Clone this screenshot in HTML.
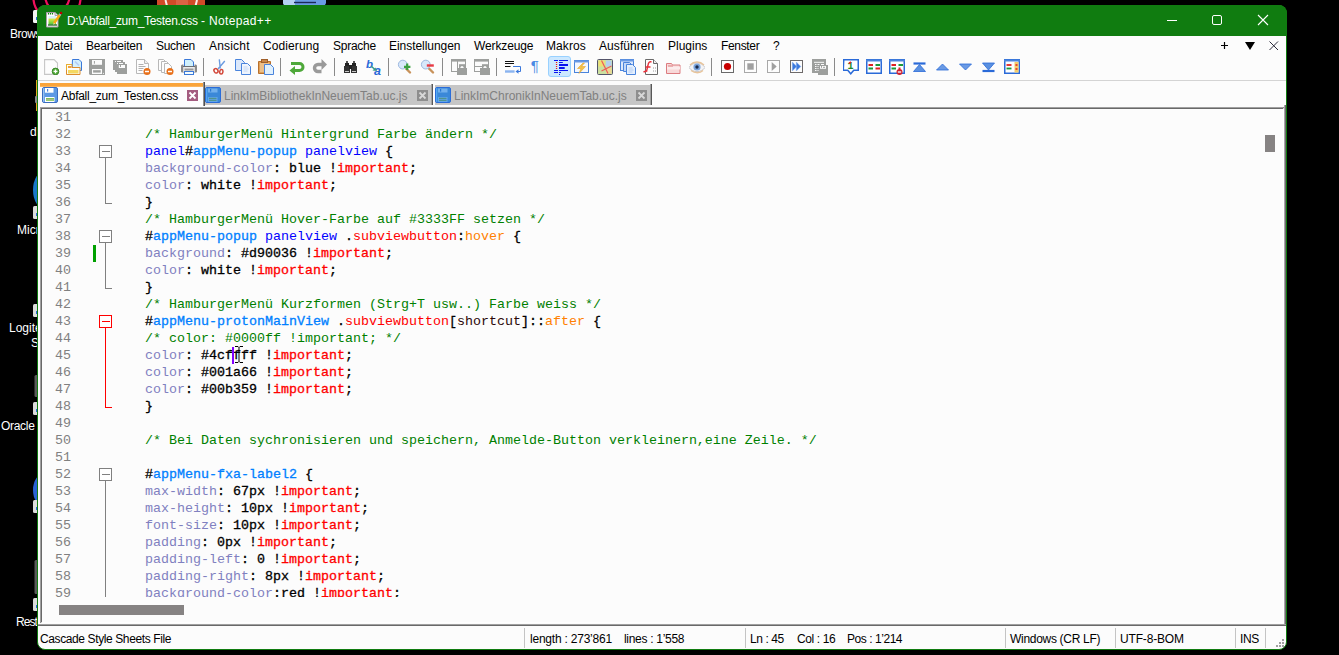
<!DOCTYPE html>
<html lang="de"><head><meta charset="utf-8"><title>Notepad++</title>
<style>
*{box-sizing:border-box;margin:0;padding:0}
html,body{width:1339px;height:655px;overflow:hidden;background:#000}
body{position:relative;font-family:"Liberation Sans",sans-serif;font-size:12px;color:#000}
.abs{position:absolute}
.dl{position:absolute;color:#fff;font-size:12px;white-space:nowrap}
#win{position:absolute;left:37px;top:5px;width:1250px;height:645px;background:#fcfcfc;border:1px solid #107c10;border-radius:8px;overflow:hidden}
#title{position:absolute;left:37px;top:5px;width:1250px;height:31px;background:#107c10;border-radius:8px 8px 0 0}
#ttext{position:absolute;left:67px;top:14px;font-size:12px;color:#fff;white-space:nowrap;line-height:15px}
.mi{position:absolute;top:39px;font-size:12px;white-space:nowrap;line-height:14px}
.tabt{position:absolute;top:89px;font-size:12px;white-space:nowrap;line-height:15px}
.sep{position:absolute;top:58px;width:1px;height:18px;background:#8a8a8a}
#editor{position:absolute;left:40px;top:107px;width:1244px;height:516px;border-top:2px solid #696969;border-left:2px solid #696969;border-right:1px solid #fff;border-bottom:1px solid #fff;background:#fcfcfc;overflow:hidden}
#code{position:absolute;left:0;top:0;width:1242px;height:488px;overflow:hidden}
.ln{position:absolute;left:0;width:29px;text-align:right;font-family:"Liberation Mono",monospace;font-size:13.330px;line-height:17px;height:17px;color:#808080;white-space:pre}
.cl{position:absolute;left:103px;font-family:"Liberation Mono",monospace;font-size:13.330px;line-height:17px;height:17px;white-space:pre;color:#000}
.c{color:#008000}.t{color:#0000ff}.o,.v,.i,.m{-webkit-text-stroke:.3px currentColor}.o{color:#000}.i{color:#0080ff}
.p{color:#8080c0}.v{color:#000}.m{color:#ff0000}.k{color:#ff0000}.h{color:#ff8000}
.st{position:absolute;top:632px;font-size:12px;white-space:nowrap;line-height:14px}
.sv{position:absolute;top:628px;width:1px;height:20px;background:#c4c4c4}
</style></head><body>

<div class="dl" style="left:10px;top:27px;letter-spacing:-0.5px">Brows</div>
<div class="dl" style="left:30px;top:125px;letter-spacing:0px">d</div>
<div class="dl" style="left:17px;top:223px;letter-spacing:0px">Micr</div>
<div class="dl" style="left:9px;top:321px;letter-spacing:0px">Logite</div>
<div class="dl" style="left:31px;top:336px;letter-spacing:0px">S</div>
<div class="dl" style="left:1px;top:419px;letter-spacing:-0.3px">Oracle</div>
<div class="dl" style="left:16px;top:615px;letter-spacing:-0.95px">Rest</div>
<svg class="abs" style="left:0;top:0" width="1339" height="655"><circle cx="57" cy="-2.600" r="23.600" fill="none" stroke="#f0105c" stroke-width="2.200"/><ellipse cx="57.400" cy="-6" rx="12.500" ry="17" fill="none" stroke="#f0105c" stroke-width="2.200"/><rect x="157" y="0" width="48" height="6" fill="#d24a28"/><path d="M165.500 0l1.500 6M197 0l-1.500 6" stroke="#fbeee8" stroke-width="2"/><rect x="176" y="0" width="12" height="6" fill="#dc6244"/><path d="M283 0h43v3a4 4 0 0 1-4 3h-35a4 4 0 0 1-4-3z" fill="#6a9ae4"/><path d="M283 0h12v6h-8a4 4 0 0 1-4-3z" fill="#b4d0f4"/><path d="M294 2.500h22" stroke="#1a2a5a" stroke-width="1.400"/><rect x="33" y="10" width="6" height="13" rx="1.500" fill="#f4f4f4"/><rect x="36" y="17" width="2" height="3" fill="#2a6ad8"/><path d="M36.500 80v31" stroke="#e8a820" stroke-width="1"/><rect x="35" y="96" width="3" height="7" rx="1" fill="#8a8a8a"/><ellipse cx="45" cy="190" rx="12" ry="19" fill="#1a78c8"/><rect x="33" y="206" width="6" height="13" rx="1.500" fill="#dcdcdc"/><rect x="36" y="213" width="2" height="3" fill="#2a6ad8"/><rect x="33" y="304" width="6" height="13" rx="1.500" fill="#dcdcdc"/><rect x="36" y="311" width="2" height="3" fill="#2a6ad8"/><rect x="34.500" y="375" width="4" height="22" rx="1.500" fill="#5a5a5a"/><rect x="33" y="402" width="6" height="13" rx="1.500" fill="#dcdcdc"/><rect x="36" y="409" width="2" height="3" fill="#2a6ad8"/><ellipse cx="45" cy="490" rx="12" ry="17" fill="#2a62d4"/><rect x="33" y="500" width="6" height="13" rx="1.500" fill="#dcdcdc"/><rect x="36" y="507" width="2" height="3" fill="#2a6ad8"/><rect x="34.500" y="560" width="4" height="34" rx="1.500" fill="#5a5a5a"/><rect x="33" y="598" width="6" height="13" rx="1.500" fill="#dcdcdc"/><rect x="36" y="605" width="2" height="3" fill="#2a6ad8"/></svg>
<!--DESKICONS-->
<div id="win"></div>
<div id="title"></div>
<svg class="abs" style="left:45px;top:11px" width="18" height="18" viewBox="0 0 18 18"><defs><linearGradient id="ng" x1="0" y1="0" x2="0" y2="1"><stop offset="0" stop-color="#d8f0fb"/><stop offset=".25" stop-color="#d8f0fb"/><stop offset=".35" stop-color="#d8e84a"/><stop offset="1" stop-color="#4ec83a"/></linearGradient></defs><path d="M1.500 1.500h8.500l3 3v11.500h-11.500z" fill="#fff" stroke="#a89aa8" stroke-width="1"/><path d="M10 1.500v3h3" fill="#e8e8e8" stroke="#a89aa8"/><rect x="3.500" y="5" width="7.500" height="8.500" fill="url(#ng)"/><path d="M3 14h9" stroke="#0a5a0a" stroke-width="1.200"/><path d="M3.500 2v1.500M5.500 2v1.500M7.500 2v1.500" stroke="#107c10" stroke-width="1.200"/><path d="M9 12.500l6-9" stroke="#f8a810" stroke-width="2.400"/><path d="M8.200 13.800l.6-2 1.400 1z" fill="#f4e0b0"/><path d="M14.600 4l.8-1.200" stroke="#8ab4d8" stroke-width="2.400"/><circle cx="16" cy="2" r="1.300" fill="#c00000"/></svg>
<div id="ttext"><span style="letter-spacing:-.31px">D:\Abfall_zum_Testen.css</span><span style="position:absolute;left:134px">-</span><span style="position:absolute;left:142px;letter-spacing:.35px">Notepad++</span></div>
<svg class="abs" style="left:1160px;top:10px" width="120" height="22"><path d="M7 10.500h10" stroke="#fff" stroke-width="1"/><rect x="52.500" y="5.500" width="9" height="9" rx="1.500" fill="none" stroke="#fff" stroke-width="1"/><path d="M98 5l10 10M108 5l-10 10" stroke="#fff" stroke-width="1.100"/></svg>
<div class="mi" style="left:45px;letter-spacing:-0.14px">Datei</div>
<div class="mi" style="left:86px;letter-spacing:-0.17px">Bearbeiten</div>
<div class="mi" style="left:156px;letter-spacing:-0.3px">Suchen</div>
<div class="mi" style="left:209px;letter-spacing:0.19px">Ansicht</div>
<div class="mi" style="left:263px;letter-spacing:0.1px">Codierung</div>
<div class="mi" style="left:333px;letter-spacing:-0.26px">Sprache</div>
<div class="mi" style="left:389px;letter-spacing:-0.05px">Einstellungen</div>
<div class="mi" style="left:474px;letter-spacing:-0.13px">Werkzeuge</div>
<div class="mi" style="left:546px;letter-spacing:0.08px">Makros</div>
<div class="mi" style="left:599px;letter-spacing:0.07px">Ausführen</div>
<div class="mi" style="left:668px;letter-spacing:0px">Plugins</div>
<div class="mi" style="left:721px;letter-spacing:-0.33px">Fenster</div>
<div class="mi" style="left:773px;letter-spacing:0px">?</div>
<svg class="abs" style="left:1215px;top:38px" width="70" height="16"><path d="M6 7.500h7M9.500 4v7" stroke="#000" stroke-width="1.200"/><path d="M30 4h10l-5 8z" fill="#000"/><path d="M54.500 3.500l8.500 8.500M63 3.500l-8.500 8.500" stroke="#2a2a3a" stroke-width="1"/></svg>
<div class="abs" style="left:548px;top:56px;width:23px;height:21px;background:#cce8ff;border:1px solid #99d1ff;border-radius:3px"></div>
<svg class="abs" style="left:44px;top:59px" width="16" height="16" viewBox="0 0 16 16"><path d="M.6 .6h9.500l3.400 3.400v11.400h-12.900z" fill="#fdfdfd" stroke="#c6c6c6" stroke-width="1.100"/><circle cx="11.500" cy="12.400" r="3.300" fill="#5ab040" stroke="#2e7e1e" stroke-width=".9"/><path d="M9.600 12.400h3.800M11.500 10.500v3.800" stroke="#fff" stroke-width="1.300"/></svg>
<svg class="abs" style="left:66px;top:59px" width="16" height="16" viewBox="0 0 16 16"><path d="M6.500 .5h6.500l2.500 2.500v8.500h-9.500z" fill="#d4f0fc" stroke="#3a78d8"/><path d="M9 2.500l4 4" stroke="#b4ccf4" stroke-width="1.600"/><path d="M.5 5.500h5.500v3h8v7h-13.500z" fill="#fdfdf6" stroke="#dc8c2c"/><path d="M.5 11v-5.500h5.500" fill="none" stroke="#e8b030"/><rect x="2" y="7" width="3.500" height="2" fill="#f4a03a"/><rect x="2" y="11" width="10.500" height="3.500" fill="#f4d860"/><path d="M6 8.500h8" stroke="#dc8c2c"/></svg>
<svg class="abs" style="left:89px;top:59px" width="16" height="16" viewBox="0 0 16 16"><path d="M0 0h16v16h-15l-1-1z" fill="#9d9f9d"/><rect x="3" y="1" width="10" height="4.800" fill="#fbfbfb"/><rect x="4.900" y="2" width="1" height="2.700" fill="#9d9f9d"/><rect x="3" y="10" width="10" height="5" fill="#fbfbfb"/><rect x="4.100" y="11.200" width="7.600" height="2.400" fill="#9d9f9d"/><rect x="13.900" y="13.900" width="1" height="1" fill="#fbfbfb"/></svg>
<svg class="abs" style="left:112px;top:59px" width="16" height="16" viewBox="0 0 16 16"><path d="M1 1h10v2h2v2h2v10h-10v-2h-2v-2h-2z" fill="#9d9f9d"/><rect x="6.800" y="6" width="6.200" height="3" fill="#fbfbfb"/><rect x="8" y="6" width="1" height="2" fill="#9d9f9d"/><path d="M5 2.500h4M7 4.500h4" stroke="#fbfbfb" stroke-width="1"/><rect x="3" y="2" width="1" height="1" fill="#fbfbfb"/><rect x="5" y="4" width="1" height="1" fill="#fbfbfb"/></svg>
<svg class="abs" style="left:135px;top:59px" width="16" height="16" viewBox="0 0 16 16"><path d="M1.500 .5h8l4 4v10h-12z" fill="#fdfdfd" stroke="#b8b8b8"/><path d="M9.500 .5v4h4" fill="#eee" stroke="#b8b8b8"/><path d="M3.500 5.500h5M3.500 7.500h7M3.500 9.500h5M3.500 11.500h4" stroke="#b0b0b0"/><circle cx="12" cy="12.500" r="3.500" fill="#e8701a"/><path d="M10 12.500h4" stroke="#fff" stroke-width="1.500"/></svg>
<svg class="abs" style="left:158px;top:59px" width="16" height="16" viewBox="0 0 16 16"><path d="M.5 .5h5l3 3v8h-8z" fill="#fdfdfd" stroke="#b8b8b8"/><path d="M3.500 2.500h5l3 3v8h-8z" fill="#fdfdfd" stroke="#b8b8b8"/><path d="M6.500 4.500h4l3 3v7h-7z" fill="#fdfdfd" stroke="#b8b8b8"/><circle cx="12" cy="12.500" r="3.500" fill="#e8701a"/><path d="M10 12.500h4" stroke="#fff" stroke-width="1.500"/></svg>
<svg class="abs" style="left:181px;top:59px" width="16" height="16" viewBox="0 0 16 16"><path d="M3.500 .5h6.500l2.500 2.500v4.500h-9z" fill="#d0f0fc" stroke="#3a78d8"/><path d="M2.500 5.500h-1a1.500 1.500 0 0 0-1.500 1.500v5.500a1 1 0 0 0 1 1h14a1 1 0 0 0 1-1v-5.500a1.500 1.500 0 0 0-1.500-1.500h-1v2h-11z" fill="#8a8a8a"/><rect x="2.200" y="7.500" width="11.600" height="5.500" fill="#ececec"/><rect x="3.500" y="9.500" width="9" height="2" fill="#9a9a9a"/><path d="M2 7.500h12" stroke="#5a5a5a" stroke-width=".8"/><rect x="3.500" y="12.500" width="9" height="3" fill="#f4fcfe" stroke="#3a78d8"/></svg>
<div class="sep" style="left:203px"></div>
<svg class="abs" style="left:212px;top:59px" width="16" height="16" viewBox="0 0 16 16"><path d="M7.300 .3L8.300 9.500M12.800 2L6 10" stroke="#6a9ae0" stroke-width="1.400" fill="none"/><ellipse cx="4" cy="11.800" rx="1.900" ry="2.300" fill="none" stroke="#d2483a" stroke-width="1.500" transform="rotate(-35 4 11.800)"/><ellipse cx="9.300" cy="12.800" rx="1.600" ry="2.300" fill="none" stroke="#d2483a" stroke-width="1.500" transform="rotate(10 9.300 12.800)"/></svg>
<svg class="abs" style="left:235px;top:59px" width="16" height="16" viewBox="0 0 16 16"><path d="M.5 .5h6l3 3v8h-9z" fill="#dbe8fb" stroke="#4a84dc"/><path d="M6.500 4.500h6l3 3v8h-9z" fill="#eef4fd" stroke="#4a84dc"/><path d="M8.500 8h4M8.500 10h5M8.500 12h4" stroke="#c4d8f6"/></svg>
<svg class="abs" style="left:258px;top:59px" width="16" height="16" viewBox="0 0 16 16"><path d="M.5 2.500h12v12h-12z" fill="#e0a058" stroke="#b8702c"/><path d="M2 4h9v9h-9z" fill="#ecc08a"/><rect x="3.500" y=".5" width="6" height="3" fill="#c8864a" stroke="#a0602a"/><path d="M6.500 5.500h6l3 3v7h-9z" fill="#e0f0fd" stroke="#4a84dc"/></svg>
<div class="sep" style="left:280px"></div>
<svg class="abs" style="left:289px;top:59px" width="16" height="16" viewBox="0 0 16 16"><path d="M2 4.500h8.500a3.200 3.200 0 0 1 0 7h-5" fill="none" stroke="#4ea83a" stroke-width="3"/><path d="M.5 11.500l5.500-4.500v9z" fill="#4ea83a"/></svg>
<svg class="abs" style="left:312px;top:59px" width="16" height="16" viewBox="0 0 16 16"><path d="M11 5.500h-5a3.300 3.300 0 0 0 0 7h3.500" fill="none" stroke="#9a9a9a" stroke-width="3.400"/><path d="M15 5.500l-5.500-5.500v11z" fill="#9a9a9a"/></svg>
<div class="sep" style="left:334px"></div>
<svg class="abs" style="left:343px;top:59px" width="16" height="16" viewBox="0 0 16 16"><path d="M2 4h4v3h-4zM9 4h4v3h-4z" fill="#222"/><path d="M1 7h6v7h-6zM8 7h6v7h-6z" fill="#333"/><rect x="6" y="6" width="3" height="4" fill="#222"/><path d="M2 12.500h4M9 12.500h4" stroke="#c8c8c8"/><path d="M3 3h2M10 3h2" stroke="#555" stroke-width="2"/></svg>
<svg class="abs" style="left:366px;top:59px" width="16" height="16" viewBox="0 0 16 16"><text x="0" y="8.500" font-family="Liberation Sans,sans-serif" font-style="italic" font-weight="bold" font-size="11.500" fill="#2a6ad8">b</text><text x="8" y="15.500" font-family="Liberation Sans,sans-serif" font-style="italic" font-weight="bold" font-size="12.500" fill="#2a6ad8">a</text><path d="M5 7l4 3.500" stroke="#3a9a8a" stroke-width="1.500"/><path d="M11 12l-4.500-.5 3-3z" fill="#3a9a8a"/></svg>
<div class="sep" style="left:388px"></div>
<svg class="abs" style="left:397px;top:59px" width="16" height="16" viewBox="0 0 16 16"><path d="M9 9.500l4 4" stroke="#c8925a" stroke-width="2.400" stroke-linecap="round"/><circle cx="5.800" cy="5.600" r="4.400" fill="#d8e8fa" stroke="#9cb8e0" stroke-width="1"/><path d="M7 7.800h6.400M10.200 4.600v6.400" stroke="#3aa040" stroke-width="2.200"/></svg>
<svg class="abs" style="left:420px;top:59px" width="16" height="16" viewBox="0 0 16 16"><path d="M9 9.500l4 4" stroke="#c8925a" stroke-width="2.400" stroke-linecap="round"/><circle cx="5.800" cy="5.600" r="4.400" fill="#d8e8fa" stroke="#9cb8e0" stroke-width="1"/><path d="M6.800 6.500h7" stroke="#e83a44" stroke-width="2.400"/></svg>
<div class="sep" style="left:442px"></div>
<svg class="abs" style="left:451px;top:59px" width="16" height="16" viewBox="0 0 16 16"><rect x=".5" y=".5" width="14" height="12" fill="#fbfbfb" stroke="#9d9f9d"/><rect x="0" y="0" width="15" height="2.600" fill="#9d9f9d"/><path d="M6.500 2v10.500" stroke="#9d9f9d"/><rect x="6" y="9" width="10" height="7" fill="#9d9f9d"/><path d="M8 9v-3.800h6v3.800" fill="#9d9f9d"/><path d="M9.200 9c.3-1.200 1-2 1.800-2s1.500.8 1.800 2z" fill="#fbfbfb"/></svg>
<svg class="abs" style="left:474px;top:59px" width="16" height="16" viewBox="0 0 16 16"><rect x=".5" y=".5" width="14" height="12" fill="#fbfbfb" stroke="#9d9f9d"/><rect x="0" y="0" width="15" height="2.600" fill="#9d9f9d"/><path d="M0 7.500h14" stroke="#9d9f9d" stroke-width="1"/><rect x="6" y="9" width="10" height="7" fill="#9d9f9d"/><path d="M8 9v-3.800h6v3.800" fill="#9d9f9d"/><path d="M9.200 9c.3-1.200 1-2 1.800-2s1.500.8 1.800 2z" fill="#fbfbfb"/></svg>
<div class="sep" style="left:496px"></div>
<svg class="abs" style="left:505px;top:59px" width="16" height="16" viewBox="0 0 16 16"><path d="M0 2.500h9M0 4.500h9M0 7.500h5.500" stroke="#111" stroke-width="1"/><path d="M0 12.500h9.600" stroke="#8ab4f0" stroke-width="2.400"/><path d="M8 7.500h7.500v5h-2.500" fill="none" stroke="#3a78dc" stroke-width="1"/><path d="M10.500 12.500l3-2.300v4.600z" fill="#3a78dc"/></svg>
<svg class="abs" style="left:529px;top:59px" width="16" height="16" viewBox="0 0 16 16"><text x="1.700" y="12.300" font-family="Liberation Sans,sans-serif" font-size="15" fill="#4a8ae4">¶</text></svg>
<svg class="abs" style="left:554px;top:59px" width="16" height="16" viewBox="0 0 16 16"><path d="M0 1.500h4M5 1.500h9M5 3.500h3.800M0 11.500h4M5 11.500h9M0 13.500h4M5 13.500h2M5 15.500h1" stroke="#0a14f0" stroke-width="1"/><path d="M5 6h9M5 9h5.700" stroke="#0a14f0" stroke-width="2"/><path d="M1.900 3.500h1.300M1.900 5.500h1.300M1.900 7.500h1.300M1.900 9.500h1.300" stroke="#f01818" stroke-width="1.200"/></svg>
<svg class="abs" style="left:574px;top:59px" width="16" height="16" viewBox="0 0 16 16"><rect x=".5" y="1.500" width="14" height="12" fill="#f4f8fe" stroke="#4a84dc"/><path d="M0 2.500h15" stroke="#6a9ae4" stroke-width="2"/><path d="M9 4l-5.500 5.500h3.500l-2 5 6.500-7h-4l3-3.500z" fill="#f2c24a" stroke="#e8a830" stroke-width=".6"/></svg>
<svg class="abs" style="left:597px;top:59px" width="16" height="16" viewBox="0 0 16 16"><rect x=".5" y=".5" width="15" height="15" rx="1" fill="#cce0a0" stroke="#54546a" stroke-width="1"/><path d="M1.500 1.500h6v6h-6z" fill="#f0e070"/><path d="M9 1.500h5.500v6h-5.500z" fill="#b4d0f0"/><path d="M9 9h5.500v5.500h-5.500z" fill="#ecd894"/><path d="M4.500 1.500l6.500 13M14.500 7l-10 5" stroke="#ee5a5a" stroke-width="1.200"/></svg>
<svg class="abs" style="left:620px;top:59px" width="16" height="16" viewBox="0 0 16 16"><rect x=".5" y=".5" width="13" height="11" fill="#dce8fb" stroke="#4a84dc"/><path d="M0 1.500h14" stroke="#6a9ae4" stroke-width="2"/><path d="M3.500 3.500h6l3 3v6h-9z" fill="#c4d8f6" stroke="#4a84dc"/><path d="M6.500 5.500h6l3 3v7h-9z" fill="#e4effd" stroke="#4a84dc"/><path d="M8.500 9h4M8.500 11h5M8.500 13h4" stroke="#b4ccf2"/></svg>
<svg class="abs" style="left:643px;top:59px" width="16" height="16" viewBox="0 0 16 16"><path d="M2.500 .5h8l4 4v11h-12z" fill="#fdfdfd" stroke="#6a6a6a"/><path d="M10.500 .5v4h4" fill="#eee" stroke="#6a6a6a"/><path d="M10 9h3M10 12h3" stroke="#9a9a9a" stroke-dasharray="1 1"/><path d="M8.500 3c-2-.7-3 .5-3.500 3l-1.500 6.500M2.500 8h5" stroke="#e8303a" stroke-width="1.400" fill="none"/><path d="M.5 13l3.500-1.200" stroke="#e8303a" stroke-width="1.500"/></svg>
<svg class="abs" style="left:666px;top:59px" width="16" height="16" viewBox="0 0 16 16"><path d="M.5 4.500h5l1 1.500h7.500v8.500h-13.500z" fill="#f8d8d8" stroke="#dc7c80"/><path d="M1 9h13" stroke="#fcecec" stroke-width="3"/><path d="M2 7h5" stroke="#dc7c80"/></svg>
<svg class="abs" style="left:689px;top:59px" width="16" height="16" viewBox="0 0 16 16"><path d="M0 8.500c3.500-6 12.500-6 16 0c-3.500 5.500-12.500 5.500-16 0z" fill="#f4f4f6" stroke="#c8c8cc"/><path d="M1 6c4-4 10-4 14 0" fill="none" stroke="#e8c49a" stroke-width="1.300"/><path d="M2 11.500c4 3 9 3 12 0" fill="none" stroke="#e8c49a" stroke-width="1.300"/><circle cx="8" cy="8" r="3.600" fill="#7aa4dc"/><circle cx="8" cy="8" r="1.700" fill="#1a2a4a"/></svg>
<div class="sep" style="left:711px"></div>
<svg class="abs" style="left:721px;top:60px" width="16" height="16" viewBox="0 0 16 16"><rect x=".5" y=".5" width="12" height="12" fill="#fdfdfd" stroke="#6a6a6a"/><circle cx="6.500" cy="6.500" r="3.600" fill="#c80000"/></svg>
<svg class="abs" style="left:744px;top:60px" width="16" height="16" viewBox="0 0 16 16"><rect x=".5" y=".5" width="12" height="12" fill="#fdfdfd" stroke="#a8a8a8"/><rect x="3.300" y="3.300" width="6.400" height="6.400" fill="#a0a0a0"/></svg>
<svg class="abs" style="left:767px;top:60px" width="16" height="16" viewBox="0 0 16 16"><rect x=".5" y=".5" width="12" height="12" fill="#fdfdfd" stroke="#a8a8a8"/><path d="M4.700 2l5 4.500-5 4.500z" fill="#a0a0a0"/></svg>
<svg class="abs" style="left:790px;top:60px" width="16" height="16" viewBox="0 0 16 16"><rect x=".5" y=".5" width="12" height="12" fill="#fdfdfd" stroke="#6e6a6a"/><path d="M2.300 2l4.500 4.500-4.500 4.500zM6.300 2l4.500 4.500-4.500 4.500z" fill="#3a78dc" stroke="#8ab0ec" stroke-width=".5"/></svg>
<svg class="abs" style="left:812px;top:59px" width="16" height="16" viewBox="0 0 16 16"><path d="M0 0h14v6h2v10h-10v-2h-6z" fill="#9d9f9d"/><path d="M2 3.300h10" stroke="#fbfbfb" stroke-width="1"/><path d="M3 5.500h1.500M5.500 5.500h2M9 5.500h3M3 7.500h1.500M5.500 7.500h1M3 9.500h1.500M5.500 9.500h1M3 11.500h1.500M5.500 11.500h1" stroke="#fbfbfb" stroke-width="1"/><rect x="8" y="7" width="6" height="2.800" fill="#fbfbfb"/><rect x="9" y="7" width="1" height="1.800" fill="#9d9f9d"/><rect x="11" y="7.800" width="2" height="1" fill="#9d9f9d"/></svg>
<div class="sep" style="left:834px"></div>
<svg class="abs" style="left:843px;top:59px" width="16" height="16" viewBox="0 0 16 16"><path d="M.75 .75h14.500v10.500h-4.500l-3 3.500l-3-3.500h-4.500z" fill="#fdfeff" stroke="#2a6ad8" stroke-width="1.500"/><text x="4.500" y="10" font-family="Liberation Mono,monospace" font-weight="bold" font-size="10" fill="#1a8a2a">1</text><path d="M6 4.500l2-1.500" stroke="#e02020" stroke-width="1.600"/></svg>
<svg class="abs" style="left:866px;top:59px" width="16" height="16" viewBox="0 0 16 16"><rect x=".75" y=".75" width="14.500" height="13.500" fill="#fdfeff" stroke="#2a6ad8" stroke-width="1.500"/><path d="M0 1.500h16" stroke="#4a84dc" stroke-width="2"/><path d="M2.500 6h4.500M9.500 9.500h4.500" stroke="#e02020" stroke-width="1.800"/><path d="M9.500 6h4.500M2.500 9.500h4.500" stroke="#1a9a3a" stroke-width="1.800"/></svg>
<svg class="abs" style="left:889px;top:59px" width="16" height="16" viewBox="0 0 16 16"><rect x=".75" y=".75" width="14.500" height="13.500" fill="#fdfeff" stroke="#2a6ad8" stroke-width="1.500"/><path d="M0 1.500h16" stroke="#4a84dc" stroke-width="2"/><path d="M2.500 6h4.500M9.500 9.500h2" stroke="#e02020" stroke-width="1.800"/><path d="M9.500 6h4.500M2.500 9.500h4.500" stroke="#1a9a3a" stroke-width="1.800"/><circle cx="10.500" cy="13" r="3" fill="#d02030"/><path d="M8.800 13h3.400" stroke="#fff" stroke-width="1.300"/></svg>
<svg class="abs" style="left:913px;top:62px" width="16" height="16" viewBox="0 0 16 16"><path d="M.5 1.500h12" stroke="#2a6ad8" stroke-width="2.200"/><path d="M.5 9.500h12l-6-7z" fill="#5a90e0" stroke="#2a6ad8" stroke-width=".8"/></svg>
<svg class="abs" style="left:936px;top:62px" width="16" height="16" viewBox="0 0 16 16"><path d="M.5 8h12l-6-6z" fill="#6a9ae4" stroke="#2a6ad8" stroke-width=".8"/></svg>
<svg class="abs" style="left:959px;top:62px" width="16" height="16" viewBox="0 0 16 16"><path d="M.5 2h12l-6 6z" fill="#6a9ae4" stroke="#2a6ad8" stroke-width=".8"/></svg>
<svg class="abs" style="left:982px;top:62px" width="16" height="16" viewBox="0 0 16 16"><path d="M.5 9h12" stroke="#2a6ad8" stroke-width="2.200"/><path d="M.5 1h12l-6 7z" fill="#5a90e0" stroke="#2a6ad8" stroke-width=".8"/></svg>
<svg class="abs" style="left:1004px;top:59px" width="16" height="16" viewBox="0 0 16 16"><rect x=".75" y=".75" width="14.500" height="13.500" fill="#fdfeff" stroke="#2a6ad8" stroke-width="1.500"/><path d="M0 1.500h16" stroke="#4a84dc" stroke-width="2"/><rect x="10.500" y="3" width="4" height="10.500" fill="#f4cc6a"/><path d="M2.500 6h5" stroke="#e02020" stroke-width="1.800"/><path d="M2.500 9.500h5" stroke="#1a9a3a" stroke-width="1.800"/><path d="M11.500 6h2M11.500 10h2" stroke="#e02020" stroke-width="1.600"/></svg>
<div class="abs" style="left:38px;top:80px;width:1248px;height:1px;background:#d4d4d4"></div>
<div class="abs" style="left:40px;top:83px;width:163px;height:24px;background:#fdfdfd"></div>
<div class="abs" style="left:40px;top:83px;width:163px;height:4px;background:linear-gradient(#faa43a 80%,#fcd29c)"></div>
<div class="abs" style="left:203px;top:82px;width:2px;height:24px;background:linear-gradient(90deg,#909090 50%,#505050 50%)"></div>
<svg class="abs" style="left:42px;top:87px" width="16" height="16" viewBox="0 0 16 16"><rect x=".5" y=".5" width="15" height="15" rx="1.500" fill="#5c98e4" stroke="#3a6cc0"/><rect x="1.200" y="1.200" width="1" height="13.600" fill="#a8ccf4"/><rect x="3" y="1" width="8.500" height="4.700" fill="#fff"/><rect x="5" y="2" width="1.200" height="2.600" fill="#4a84dc"/><rect x="3" y="10" width="9.500" height="5" fill="#fff"/><rect x="4" y="11" width="8" height="2.800" fill="#7ac050"/><path d="M4 12.400h8" stroke="#b8b8a8" stroke-width=".8"/></svg>
<div class="tabt" style="left:61px;color:#000;letter-spacing:-.27px">Abfall_zum_Testen.css</div>
<svg class="abs" style="left:187px;top:90px" width="11" height="11"><rect width="11" height="11" fill="#a45c80"/><path d="M2.500 2.500l6 6M8.500 2.500l-6 6" stroke="#fff" stroke-width="1.800"/></svg>
<div class="abs" style="left:205px;top:85px;width:226px;height:20px;background:#c6c6c6"></div>
<div class="abs" style="left:431px;top:84px;width:2px;height:21px;background:linear-gradient(90deg,#a0a0a0 50%,#585858 50%)"></div>
<svg class="abs" style="left:205px;top:87px" width="16" height="16" viewBox="0 0 16 16"><rect x=".5" y=".5" width="15" height="15" rx="1.500" fill="#3a88d8" stroke="#2a6cd8"/><rect x="1.200" y="1.200" width="1" height="13.600" fill="#5ab0f8"/><rect x="3" y="1.500" width="9.500" height="4" fill="#72b0ec"/><rect x="5" y="2" width="1.200" height="2.600" fill="#2a78d4"/><rect x="3" y="10" width="9.500" height="5" fill="#62a6ea"/><path d="M4 11.300h7.500M4 13.300h7.500" stroke="#4a9078" stroke-width="1"/></svg>
<div class="tabt" style="left:224px;color:#808080">LinkImBibliothekInNeuemTab.uc.js</div>
<svg class="abs" style="left:417px;top:90px" width="11" height="11"><rect width="11" height="11" fill="#8e8e8e"/><path d="M2.500 2.500l6 6M8.500 2.500l-6 6" stroke="#d8d8d8" stroke-width="1.800"/></svg>
<div class="abs" style="left:435px;top:85px;width:215px;height:20px;background:#c6c6c6"></div>
<div class="abs" style="left:650px;top:84px;width:2px;height:21px;background:linear-gradient(90deg,#a0a0a0 50%,#585858 50%)"></div>
<svg class="abs" style="left:435px;top:87px" width="16" height="16" viewBox="0 0 16 16"><rect x=".5" y=".5" width="15" height="15" rx="1.500" fill="#3a88d8" stroke="#2a6cd8"/><rect x="1.200" y="1.200" width="1" height="13.600" fill="#5ab0f8"/><rect x="3" y="1.500" width="9.500" height="4" fill="#72b0ec"/><rect x="5" y="2" width="1.200" height="2.600" fill="#2a78d4"/><rect x="3" y="10" width="9.500" height="5" fill="#62a6ea"/><path d="M4 11.300h7.500M4 13.300h7.500" stroke="#4a9078" stroke-width="1"/></svg>
<div class="tabt" style="left:454px;color:#808080">LinkImChronikInNeuemTab.uc.js</div>
<svg class="abs" style="left:636px;top:90px" width="11" height="11"><rect width="11" height="11" fill="#8e8e8e"/><path d="M2.500 2.500l6 6M8.500 2.500l-6 6" stroke="#d8d8d8" stroke-width="1.800"/></svg>
<div class="abs" style="left:40px;top:107px;width:1243px;height:1px;background:#a0a0a0;z-index:2"></div><div class="abs" style="left:40px;top:107px;width:1px;height:515px;background:#a0a0a0;z-index:2"></div>
<div id="editor"><div id="code">
<div class="ln" style="top:0px">31</div>
<div class="ln" style="top:17px">32</div>
<div class="cl" style="top:17px"><span class="c">/* HamburgerMenü Hintergrund Farbe ändern */</span></div>
<div class="ln" style="top:34px">33</div>
<div class="cl" style="top:34px"><span class="t">panel</span><span class="o">#</span><span class="i">appMenu-popup</span> <span class="t">panelview</span> <span class="o">{</span></div>
<div class="ln" style="top:51px">34</div>
<div class="cl" style="top:51px"><span class="p">background-color</span><span class="o">:</span> <span class="v">blue</span> <span class="o">!</span><span class="m">important</span><span class="o">;</span></div>
<div class="ln" style="top:68px">35</div>
<div class="cl" style="top:68px"><span class="p">color</span><span class="o">:</span> <span class="v">white</span> <span class="o">!</span><span class="m">important</span><span class="o">;</span></div>
<div class="ln" style="top:85px">36</div>
<div class="cl" style="top:85px"><span class="o">}</span></div>
<div class="ln" style="top:102px">37</div>
<div class="cl" style="top:102px"><span class="c">/* HamburgerMenü Hover-Farbe auf #3333FF setzen */</span></div>
<div class="ln" style="top:119px">38</div>
<div class="cl" style="top:119px"><span class="o">#</span><span class="i">appMenu-popup</span> <span class="t">panelview</span> <span class="o">.</span><span class="k">subviewbutton</span><span class="o">:</span><span class="h">hover</span> <span class="o">{</span></div>
<div class="ln" style="top:136px">39</div>
<div class="cl" style="top:136px"><span class="p">background</span><span class="o">:</span> <span class="v">#d90036</span> <span class="o">!</span><span class="m">important</span><span class="o">;</span></div>
<div class="ln" style="top:153px">40</div>
<div class="cl" style="top:153px"><span class="p">color</span><span class="o">:</span> <span class="v">white</span> <span class="o">!</span><span class="m">important</span><span class="o">;</span></div>
<div class="ln" style="top:170px">41</div>
<div class="cl" style="top:170px"><span class="o">}</span></div>
<div class="ln" style="top:187px">42</div>
<div class="cl" style="top:187px"><span class="c">/* HamburgerMenü Kurzformen (Strg+T usw..) Farbe weiss */</span></div>
<div class="ln" style="top:204px">43</div>
<div class="cl" style="top:204px"><span class="o">#</span><span class="i">appMenu-protonMainView</span> <span class="o">.</span><span class="k">subviewbutton</span><span class="o">[</span><span style="color:#2a0808">shortcut</span><span class="o">]::</span><span class="h">after</span> <span class="o">{</span></div>
<div class="ln" style="top:221px">44</div>
<div class="cl" style="top:221px"><span class="c">/* color: #0000ff !important; */</span></div>
<div class="ln" style="top:238px">45</div>
<div class="cl" style="top:238px"><span class="p">color</span><span class="o">:</span> <span class="v">#4cffff</span> <span class="o">!</span><span class="m">important</span><span class="o">;</span></div>
<div class="ln" style="top:255px">46</div>
<div class="cl" style="top:255px"><span class="p">color</span><span class="o">:</span> <span class="v">#001a66</span> <span class="o">!</span><span class="m">important</span><span class="o">;</span></div>
<div class="ln" style="top:272px">47</div>
<div class="cl" style="top:272px"><span class="p">color</span><span class="o">:</span> <span class="v">#00b359</span> <span class="o">!</span><span class="m">important</span><span class="o">;</span></div>
<div class="ln" style="top:289px">48</div>
<div class="cl" style="top:289px"><span class="o">}</span></div>
<div class="ln" style="top:306px">49</div>
<div class="ln" style="top:323px">50</div>
<div class="cl" style="top:323px"><span class="c">/* Bei Daten sychronisieren und speichern, Anmelde-Button verkleinern,eine Zeile. */</span></div>
<div class="ln" style="top:340px">51</div>
<div class="ln" style="top:357px">52</div>
<div class="cl" style="top:357px"><span class="o">#</span><span class="i">appMenu-fxa-label2</span> <span class="o">{</span></div>
<div class="ln" style="top:374px">53</div>
<div class="cl" style="top:374px"><span class="p">max-width</span><span class="o">:</span> <span class="v">67px</span> <span class="o">!</span><span class="m">important</span><span class="o">;</span></div>
<div class="ln" style="top:391px">54</div>
<div class="cl" style="top:391px"><span class="p">max-height</span><span class="o">:</span> <span class="v">10px</span> <span class="o">!</span><span class="m">important</span><span class="o">;</span></div>
<div class="ln" style="top:408px">55</div>
<div class="cl" style="top:408px"><span class="p">font-size</span><span class="o">:</span> <span class="v">10px</span> <span class="o">!</span><span class="m">important</span><span class="o">;</span></div>
<div class="ln" style="top:425px">56</div>
<div class="cl" style="top:425px"><span class="p">padding</span><span class="o">:</span> <span class="v">0px</span> <span class="o">!</span><span class="m">important</span><span class="o">;</span></div>
<div class="ln" style="top:442px">57</div>
<div class="cl" style="top:442px"><span class="p">padding-left</span><span class="o">:</span> <span class="v">0</span> <span class="o">!</span><span class="m">important</span><span class="o">;</span></div>
<div class="ln" style="top:459px">58</div>
<div class="cl" style="top:459px"><span class="p">padding-right</span><span class="o">:</span> <span class="v">8px</span> <span class="o">!</span><span class="m">important</span><span class="o">;</span></div>
<div class="ln" style="top:476px">59</div>
<div class="cl" style="top:476px"><span class="p">background-color</span><span class="o">:</span><span class="v">red</span> <span class="o">!</span><span class="m">important</span><span class="o">;</span></div>
<div class="abs" style="left:57px;top:36px;width:13px;height:13px;border:1px solid #808080;background:#fff"></div><div class="abs" style="left:60px;top:42px;width:8px;height:1px;background:#808080"></div><div class="abs" style="left:63px;top:49px;width:1px;height:46px;background:#808080"></div><div class="abs" style="left:63px;top:94px;width:7px;height:1px;background:#808080"></div>
<div class="abs" style="left:57px;top:121px;width:13px;height:13px;border:1px solid #808080;background:#fff"></div><div class="abs" style="left:60px;top:127px;width:8px;height:1px;background:#808080"></div><div class="abs" style="left:63px;top:134px;width:1px;height:46px;background:#808080"></div><div class="abs" style="left:63px;top:179px;width:7px;height:1px;background:#808080"></div>
<div class="abs" style="left:57px;top:206px;width:13px;height:13px;border:1px solid #ff0000;background:#fff"></div><div class="abs" style="left:60px;top:212px;width:8px;height:1px;background:#ff0000"></div><div class="abs" style="left:63px;top:219px;width:1px;height:80px;background:#ff0000"></div><div class="abs" style="left:63px;top:298px;width:7px;height:1px;background:#ff0000"></div>
<div class="abs" style="left:57px;top:359px;width:13px;height:13px;border:1px solid #808080;background:#fff"></div><div class="abs" style="left:60px;top:365px;width:8px;height:1px;background:#808080"></div><div class="abs" style="left:63px;top:372px;width:1px;height:121px;background:#808080"></div>
<div class="abs" style="left:51px;top:136px;width:3px;height:17px;background:#00a000"></div>
<div class="abs" style="left:190px;top:238px;width:1.500px;height:17px;background:#8000ff"></div>
<svg class="abs" style="left:193px;top:237px" width="8" height="17"><path d="M0 .5h3l1 1l1-1h3M0 16.500h3l1-1l1 1h3M4 1.500v14" fill="none" stroke="#000" stroke-width="1"/></svg>
</div>
<div class="abs" style="left:17px;top:496px;width:125px;height:10px;background:#868383"></div>
<div class="abs" style="left:1223px;top:26px;width:10px;height:17px;background:#868383"></div>
</div>
<div class="abs" style="left:1284px;top:105px;width:2px;height:520px;background:linear-gradient(90deg,#a8a8a8 50%,#706870 50%)"></div>
<div class="abs" style="left:38px;top:624px;width:1248px;height:2px;background:linear-gradient(#a0a0a0 50%,#696969 50%)"></div>
<div class="st" style="left:40px;letter-spacing:-0.39px">Cascade Style Sheets File</div>
<div class="sv" style="left:524px"></div>
<div class="st" style="left:530px;letter-spacing:-0.22px">length : 273’861</div>
<div class="st" style="left:624px;letter-spacing:-0.3px">lines : 1’558</div>
<div class="sv" style="left:745px"></div>
<div class="st" style="left:750px;letter-spacing:-0.4px">Ln : 45</div>
<div class="st" style="left:797px;letter-spacing:-0.39px">Col : 16</div>
<div class="st" style="left:847px;letter-spacing:-0.45px">Pos : 1’214</div>
<div class="sv" style="left:1005px"></div>
<div class="st" style="left:1010px;letter-spacing:-0.3px">Windows (CR LF)</div>
<div class="sv" style="left:1115px"></div>
<div class="st" style="left:1120px;letter-spacing:-0.17px">UTF-8-BOM</div>
<div class="sv" style="left:1235px"></div>
<div class="st" style="left:1240px;letter-spacing:-0.4px">INS</div>
<div class="sv" style="left:1265px"></div>
<svg class="abs" style="left:1275px;top:638px" width="10" height="10"><path d="M7 1h2v2h-2zM4 4h2v2h-2zM7 4h2v2h-2zM1 7h2v2h-2zM4 7h2v2h-2zM7 7h2v2h-2z" fill="#a0a0a0"/></svg>
</body></html>
